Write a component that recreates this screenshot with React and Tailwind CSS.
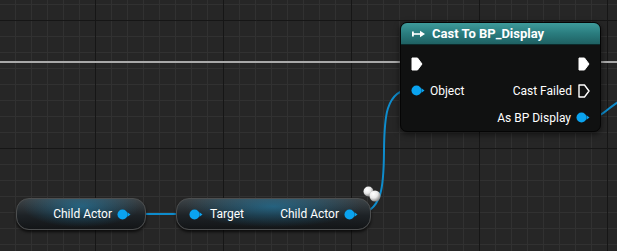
import React from 'react'

const font = { fontFamily: 'Roboto, "Liberation Sans", sans-serif' }

function DataPin({ className = '' }) {
  return (
    <svg width="14" height="11" viewBox="0 0 14 11" className={className}>
      <circle cx="5.5" cy="5.5" r="5" fill="#0aa3ef" />
      <path d="M10.5 3.2 L13.5 5.5 L10.5 7.8 Z" fill="#0aa3ef" />
    </svg>
  )
}

function ExecPin({ hollow = false }) {
  return (
    <svg width="12" height="14" viewBox="0 0 12 14">
      <path
        d="M1 1 H6.5 L11 7 L6.5 13 H1 Z"
        fill={hollow ? 'none' : '#ffffff'}
        stroke="#ffffff"
        strokeWidth={hollow ? 1.4 : 1}
        strokeLinejoin="round"
      />
    </svg>
  )
}

function CastIcon() {
  return (
    <svg width="15" height="10" viewBox="0 0 15 10">
      <rect x="1" y="2.5" width="1.8" height="5" fill="#fff" />
      <rect x="2" y="4.2" width="8" height="1.6" fill="#fff" />
      <path d="M9 1.8 L14 5 L9 8.2 Z" fill="#fff" />
    </svg>
  )
}

function Background() {
  const minorV = []
  for (let x = 15; x < 617; x += 16) minorV.push(x)
  const minorH = []
  for (let y = 4; y < 251; y += 16) minorH.push(y)
  return (
    <svg className="absolute inset-0" width="617" height="251">
      {minorV.map(x => (
        <line key={'v' + x} x1={x + 0.5} y1="0" x2={x + 0.5} y2="251" stroke="#313131" />
      ))}
      {minorH.map(y => (
        <line key={'h' + y} x1="0" y1={y + 0.5} x2="617" y2={y + 0.5} stroke="#313131" />
      ))}
      {[95, 223, 351, 479, 607].map(x => (
        <line key={'V' + x} x1={x + 0.5} y1="0" x2={x + 0.5} y2="251" stroke="#161616" />
      ))}
      {[20, 148].map(y => (
        <line key={'H' + y} x1="0" y1={y + 0.5} x2="617" y2={y + 0.5} stroke="#161616" />
      ))}

      {/* exec wire */}
      <line x1="0" y1="62" x2="617" y2="62" stroke="#a9a9a9" strokeWidth="2.2" />

      {/* data wires */}
      <line x1="131" y1="214" x2="190" y2="214" stroke="#0e8ccc" strokeWidth="2" />
      <path d="M355 214 C 412 214, 356 89, 413 89" fill="none" stroke="#0e8ccc" strokeWidth="2" />
      <path d="M590 117 C 608 117, 606 103, 640 92" fill="none" stroke="#0e8ccc" strokeWidth="2" />
    </svg>
  )
}

function Knots() {
  return (
    <svg className="absolute inset-0 pointer-events-none" width="617" height="251">
      <defs>
        <radialGradient id="knot2" cx="35%" cy="30%" r="70%">
          <stop offset="0%" stopColor="#ffffff" />
          <stop offset="55%" stopColor="#e8e8e8" />
          <stop offset="100%" stopColor="#8c8c8c" />
        </radialGradient>
      </defs>
      <circle cx="368.5" cy="191.5" r="5" fill="url(#knot2)" />
      <circle cx="375" cy="196" r="5.5" fill="url(#knot2)" />
    </svg>
  )
}

const pureNode =
  'absolute h-8 rounded-[13px] border border-[#4d4f50] flex items-center text-[12px] text-white whitespace-nowrap shadow-[0_2px_3px_rgba(0,0,0,0.7)] bg-[radial-gradient(ellipse_at_50%_25%,rgba(30,135,185,0.55),transparent_65%),linear-gradient(to_bottom,#3d4448,#1d2226_55%,#131517)]'

export default function App() {
  return (
    <div className="relative w-[617px] h-[251px] overflow-hidden bg-[#262626]" style={font}>
      <Background />

      {/* Cast node */}
      <div className="absolute left-[400px] top-[22px] w-[201px] h-[110px] rounded-[7px] border border-[#050505] bg-[#101111] shadow-[0_2px_6px_rgba(0,0,0,0.6)] overflow-hidden">
        <div className="h-[22px] flex items-center gap-[4px] pl-[10px] text-white text-[13px] font-bold whitespace-nowrap bg-[linear-gradient(to_bottom,#3e9b9b,#2a7c7e_50%,#1f6163)] border-b border-[#0b2a2b]">
          <CastIcon />
          <span className="ml-[2px]">Cast To BP_Display</span>
        </div>
        <div className="flex flex-col pt-[5px] px-[10px] text-white text-[12px] whitespace-nowrap">
          <div className="h-[27px] flex items-center justify-between">
            <ExecPin />
            <ExecPin />
          </div>
          <div className="h-[27px] flex items-center justify-between">
            <div className="flex items-center gap-[5px]">
              <DataPin />
              <span>Object</span>
            </div>
            <div className="flex items-center gap-[6px]">
              <span>Cast Failed</span>
              <ExecPin hollow />
            </div>
          </div>
          <div className="h-[27px] flex items-center justify-end gap-[5px]">
            <span>As BP Display</span>
            <DataPin />
          </div>
        </div>
      </div>

      {/* Child Actor getter */}
      <div className={pureNode + ' left-[16px] top-[198px] w-[130px] justify-end pr-[14px] gap-[5px]'}>
        <span>Child Actor</span>
        <DataPin />
      </div>

      {/* Target -> Child Actor */}
      <div className={pureNode + ' left-[176px] top-[198px] w-[195px] justify-between px-[12px]'}>
        <div className="flex items-center gap-[7px]">
          <DataPin />
          <span>Target</span>
        </div>
        <div className="flex items-center gap-[5px]">
          <span>Child Actor</span>
          <DataPin />
        </div>
      </div>

      <Knots />
    </div>
  )
}
